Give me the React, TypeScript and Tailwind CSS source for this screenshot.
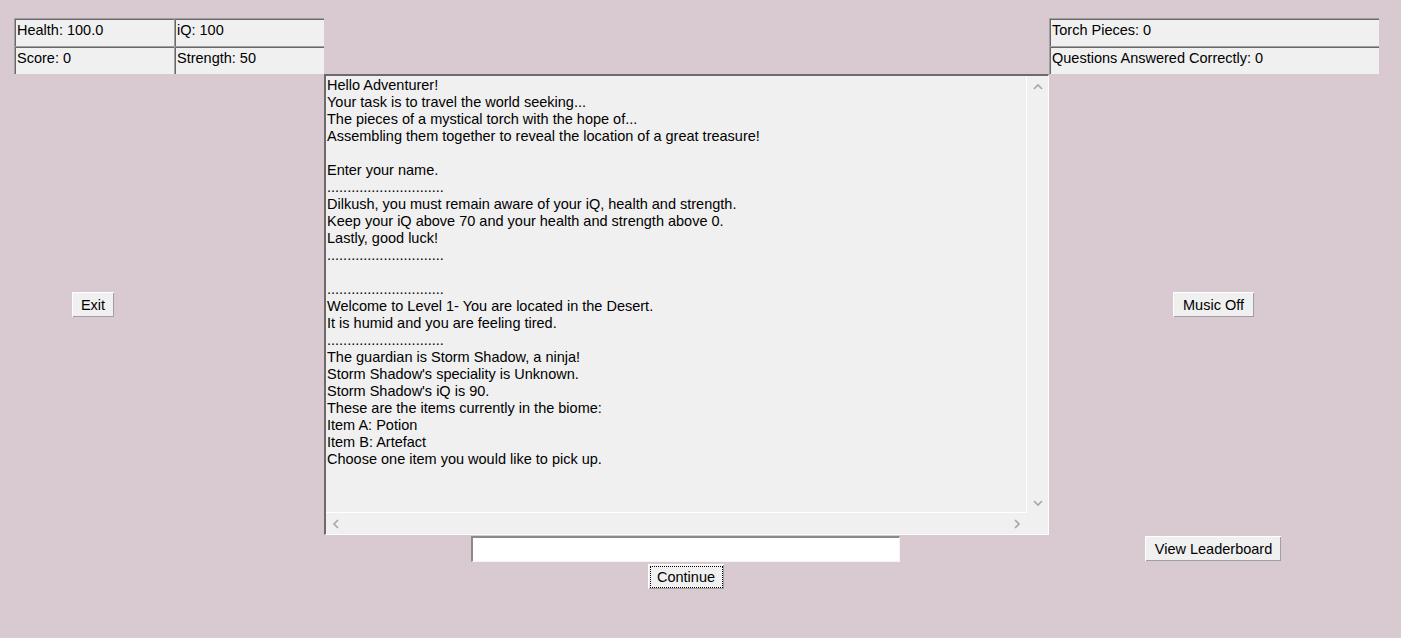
import React from "react";

const font = { fontFamily: '"Liberation Sans", Arial, sans-serif' };

const dots = ".............................";

const lines: string[] = [
  "Hello Adventurer!",
  "Your task is to travel the world seeking...",
  "The pieces of a mystical torch with the hope of...",
  "Assembling them together to reveal the location of a great treasure!",
  "",
  "Enter your name.",
  dots,
  "Dilkush, you must remain aware of your iQ, health and strength.",
  "Keep your iQ above 70 and your health and strength above 0.",
  "Lastly, good luck!",
  dots,
  "",
  dots,
  "Welcome to Level 1- You are located in the Desert.",
  "It is humid and you are feeling tired.",
  dots,
  "The guardian is Storm Shadow, a ninja!",
  "Storm Shadow's speciality is Unknown.",
  "Storm Shadow's iQ is 90.",
  "These are the items currently in the biome:",
  "Item A: Potion",
  "Item B: Artefact",
  "Choose one item you would like to pick up.",
];

function Cell({ text, className = "" }: { text: string; className?: string }) {
  return (
    <div
      className={`flex h-[28px] items-center border-t border-l border-[#a0a0a0] border-r-white border-b-white bg-[#f0f0f0] pl-[2px] pb-[5px] text-[14.5px] leading-[16px] text-black shadow-[inset_1px_1px_0_#696969] ${className}`}
    >
      {text}
    </div>
  );
}

function Btn({ label, w, focus = false }: { label: string; w: string; focus?: boolean }) {
  return (
    <button
      className={`flex h-[25px] ${w} items-center justify-center border-t border-l border-white border-r-[#696969] border-b-[#696969] bg-[#f0f0f0] p-[1px] text-[14.5px] leading-[16px] text-black shadow-[inset_-1px_-1px_0_#a0a0a0]`}
    >
      <span
        className={`flex h-full w-full items-center justify-center ${
          focus ? "border border-dotted border-black" : ""
        }`}
      >
        {label}
      </span>
    </button>
  );
}

function Chevron({ dir }: { dir: "up" | "down" | "left" | "right" }) {
  const pts = {
    up: "1,6 5,2 9,6",
    down: "1,2 5,6 9,2",
    left: "6,1 2,5 6,9",
    right: "2,1 6,5 2,9",
  }[dir];
  const horiz = dir === "left" || dir === "right";
  return (
    <svg
      width={horiz ? 8 : 10}
      height={horiz ? 10 : 8}
      viewBox={horiz ? "0 0 8 10" : "0 0 10 8"}
    >
      <polyline points={pts} fill="none" stroke="#a6a6a6" strokeWidth="1.6" />
    </svg>
  );
}

export default function App() {
  return (
    <div className="min-h-screen bg-[#d8cad0] pt-[18px] pl-[14px]" style={font}>
      <div className="grid grid-cols-[310px_725px_330px] grid-rows-[56px_461px_auto]">
        {/* left stats */}
        <div className="grid grid-cols-[160px_150px]">
          <Cell text="Health: 100.0" />
          <Cell text="iQ: 100" />
          <Cell text="Score: 0" />
          <Cell text="Strength: 50" />
        </div>
        <div />
        {/* right stats */}
        <div className="flex flex-col">
          <Cell text="Torch Pieces: 0" />
          <Cell text="Questions Answered Correctly: 0" />
        </div>

        {/* left exit */}
        <div className="grid grid-cols-[160px_150px] items-center">
          <div className="flex justify-center pr-[3px]">
            <Btn label="Exit" w="w-[42px]" />
          </div>
        </div>

        {/* text area */}
        <div className="flex flex-col border-t-2 border-l-2 border-[#6b6b6b] border-r border-b border-r-white border-b-white bg-[#f0f0f0]">
          <div className="flex min-h-0 flex-1">
            <div className="flex-1 overflow-hidden border-r border-b border-white pl-[1px] pt-[1px] text-[14.5px] leading-[17px] text-black">
              {lines.map((l, i) => (
                <div key={i} className="h-[17px] whitespace-pre">
                  {l}
                </div>
              ))}
            </div>
            <div className="flex w-[21px] flex-col justify-between">
              <div className="flex h-[21px] items-center justify-center">
                <Chevron dir="up" />
              </div>
              <div className="flex h-[21px] items-center justify-center">
                <Chevron dir="down" />
              </div>
            </div>
          </div>
          <div className="flex h-[21px]">
            <div className="flex flex-1 items-center justify-between px-[6px]">
              <Chevron dir="left" />
              <Chevron dir="right" />
            </div>
            <div className="w-[21px]" />
          </div>
        </div>

        {/* right music */}
        <div className="flex items-center justify-center pr-[2px]">
          <Btn label="Music Off" w="w-[81px]" />
        </div>

        <div />
        {/* input + continue */}
        <div className="flex flex-col items-center pt-[1px] pr-[2px]">
          <input
            className="h-[26px] w-[429px] border-t-2 border-l-2 border-[#8a8a8a] border-r border-b border-r-[#f4f4f4] border-b-[#f4f4f4] bg-white outline-none"
            defaultValue=""
          />
          <div className="mt-[2px]">
            <Btn label="Continue" w="w-[76px]" focus />
          </div>
        </div>
        <div className="flex justify-center pt-[1px] pr-[2px]">
          <Btn label="View Leaderboard" w="w-[136px]" />
        </div>
      </div>
    </div>
  );
}
